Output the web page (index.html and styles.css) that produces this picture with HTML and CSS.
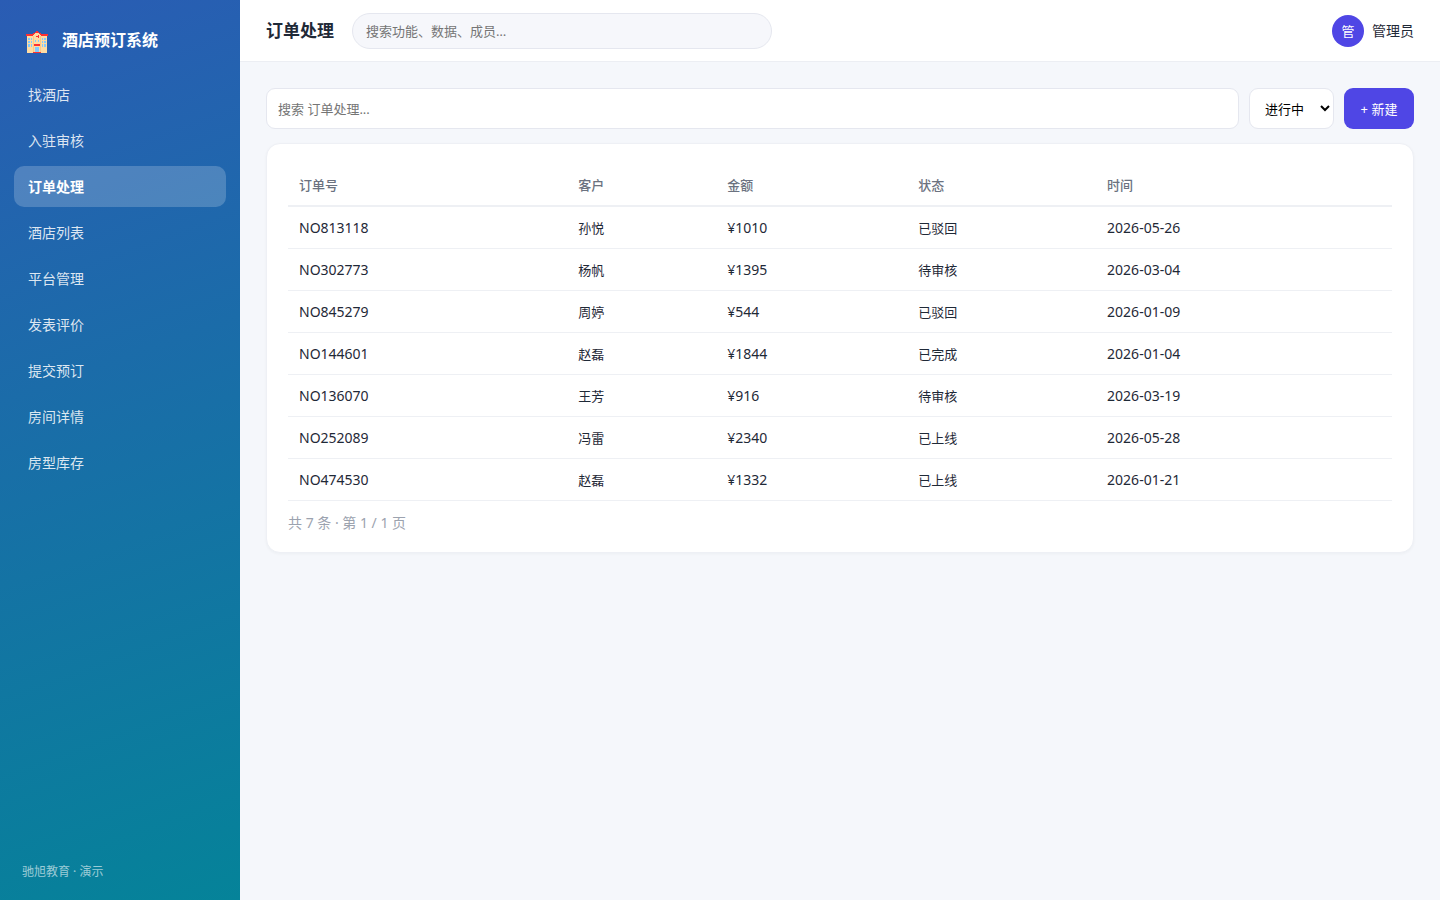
FILE: index.html
```html
<!DOCTYPE html>
<html lang="zh-CN">
<head>
<meta charset="utf-8">
<meta name="viewport" content="width=device-width, initial-scale=1">
<title>酒店预订系统</title>
<link rel="stylesheet" href="styles.css">
</head>
<body>
<div class="app">
  <aside class="sidebar">
    <div class="brand">
      <svg class="brand-icon" viewBox="0 0 22 22" shape-rendering="crispEdges" aria-hidden="true">
        <path fill="#ffdca3" d="M1 4h6V2h2V1h4v1h2v2h6v18H1z"/>
        <path fill="#fbc987" d="M7 5h1v17H7zM14 5h1v17h-1z"/>
        <path fill="#ff3030" d="M0 3h7V2h2v1H8v1H7v1H0zM9 1h1V0h2v1h1v1H9zM13 2h2v1h7v2h-7V4h-1V3h-1zM10 5h2V4h1v3h-1V6h-2zM8 13h6v2H8zM7 21h8v1H7z"/>
        <path fill="#83c9ff" d="M2 7h2v2H2zM5 7h1v2H5zM2 10h2v2H2zM5 10h1v2H5zM2 13h2v3H2zM5 13h1v3H5zM16 7h1v2h-1zM18 7h2v2h-2zM16 10h1v2h-1zM18 10h2v2h-2zM16 13h1v3h-1zM18 13h2v3h-2zM9 9h1v2H9zM12 9h1v2h-1zM9 16h4v5H9z"/>
      </svg>
      <span>酒店预订系统</span>
    </div>
    <nav class="nav">
      <a class="nav-item" href="#">找酒店</a>
      <a class="nav-item" href="#">入驻审核</a>
      <a class="nav-item active" href="#" aria-current="page">订单处理</a>
      <a class="nav-item" href="#">酒店列表</a>
      <a class="nav-item" href="#">平台管理</a>
      <a class="nav-item" href="#">发表评价</a>
      <a class="nav-item" href="#">提交预订</a>
      <a class="nav-item" href="#">房间详情</a>
      <a class="nav-item" href="#">房型库存</a>
    </nav>
    <div class="side-foot">驰旭教育 · 演示</div>
  </aside>
  <div class="main">
    <header class="topbar">
      <h1 class="title">订单处理</h1>
      <input class="global-search" type="search" aria-label="全局搜索" placeholder="搜索功能、数据、成员…">
      <div class="user"><span class="avatar">管</span><span>管理员</span></div>
    </header>
    <main class="content">
      <div class="toolbar">
        <input class="field filter" type="text" aria-label="搜索订单处理" placeholder="搜索 订单处理...">
        <select class="field status" aria-label="状态"><option>进行中</option></select>
        <button class="primary" type="button">+ 新建</button>
      </div>
      <section class="card">
        <table class="orders">
          <colgroup><col class="c-no"><col class="c-customer"><col class="c-amount"><col class="c-status"><col></colgroup>
          <thead><tr><th>订单号</th><th>客户</th><th>金额</th><th>状态</th><th>时间</th></tr></thead>
          <tbody>
            <tr><td class="num">NO813118</td><td>孙悦</td><td class="num">¥1010</td><td>已驳回</td><td class="num">2026-05-26</td></tr>
            <tr><td class="num">NO302773</td><td>杨帆</td><td class="num">¥1395</td><td>待审核</td><td class="num">2026-03-04</td></tr>
            <tr><td class="num">NO845279</td><td>周婷</td><td class="num">¥544</td><td>已驳回</td><td class="num">2026-01-09</td></tr>
            <tr><td class="num">NO144601</td><td>赵磊</td><td class="num">¥1844</td><td>已完成</td><td class="num">2026-01-04</td></tr>
            <tr><td class="num">NO136070</td><td>王芳</td><td class="num">¥916</td><td>待审核</td><td class="num">2026-03-19</td></tr>
            <tr><td class="num">NO252089</td><td>冯雷</td><td class="num">¥2340</td><td>已上线</td><td class="num">2026-05-28</td></tr>
            <tr><td class="num">NO474530</td><td>赵磊</td><td class="num">¥1332</td><td>已上线</td><td class="num">2026-01-21</td></tr>
          </tbody>
        </table>
        <div class="pager">共 7 条 · 第 1 / 1 页</div>
      </section>
    </main>
  </div>
</div>
</body>
</html>
```

FILE: styles.css
```css
* { box-sizing: border-box; }
body {
  margin: 0;
  background: #f5f7fb;
  color: #1f2937;
  font: 14px/20px "Noto Sans", "Noto Sans CJK SC", sans-serif;
}
input, select, button { font: inherit; font-size: 13px; }
.app { display: flex; min-height: 100vh; }

.sidebar {
  display: flex;
  flex-direction: column;
  flex: 0 0 240px;
  padding: 22px 14px 18px;
  background: linear-gradient(160deg, #2a5cb4, #058399);
  color: #fff;
}
.brand {
  display: flex;
  align-items: center;
  gap: 14px;
  height: 36px;
  padding-left: 12px;
  margin-bottom: 16px;
  font-size: 16px;
  font-weight: 700;
}
.brand-icon { width: 22px; height: 22px; margin-top: 4px; }
.nav { display: flex; flex-direction: column; gap: 5px; }
.nav-item {
  display: flex;
  align-items: center;
  height: 41px;
  padding: 0 14px;
  border-radius: 10px;
  color: rgba(255, 255, 255, .85);
  text-decoration: none;
}
.nav-item.active { background: rgba(255, 255, 255, .2); color: #fff; font-weight: 700; }
.side-foot { margin-top: auto; padding-left: 8px; font-size: 12px; color: rgba(255, 255, 255, .6); }

.main { flex: 1; min-width: 0; }
.topbar {
  display: flex;
  align-items: center;
  gap: 18px;
  height: 62px;
  padding: 0 26px;
  background: #fff;
  border-bottom: 1px solid #eceef3;
}
.title { margin: 0; font-size: 17px; font-weight: 700; }
.global-search {
  flex: 0 1 420px;
  min-width: 0;
  height: 36px;
  padding: 0 13px;
  border: 1px solid #e5e7ef;
  border-radius: 18px;
  background: #f6f7fb;
  appearance: none;
}
input::placeholder { color: #757575; }
.user { display: flex; align-items: center; gap: 8px; margin-left: auto; }
.avatar {
  display: grid;
  place-items: center;
  width: 32px;
  height: 32px;
  border-radius: 50%;
  background: #4f46e5;
  color: #fff;
  font-size: 13px;
}

.content { padding: 26px; }
.toolbar { display: flex; gap: 10px; height: 41px; margin-bottom: 14px; }
.field { border: 1px solid #e5e7ef; border-radius: 9px; background: #fff; }
.filter { flex: 1; min-width: 0; padding: 0 11px; }
.status { width: 85px; padding: 0 0 0 11px; color: #000; }
.primary {
  width: 70px;
  padding: 0;
  border: 0;
  border-radius: 9px;
  background: #4f46e5;
  color: #fff;
}
.card {
  padding: 20px 21px 19px;
  border: 1px solid #eef0f5;
  border-radius: 14px;
  background: #fff;
  box-shadow: 0 1px 3px rgba(30, 41, 59, .04);
}
.orders { width: 100%; table-layout: fixed; border-collapse: separate; border-spacing: 0; font-size: 13px; }
.c-no { width: 25.3%; }
.c-customer { width: 13.5%; }
.c-amount { width: 17.3%; }
.c-status { width: 17.1%; }
th, td { height: 42px; padding: 0 11px; text-align: left; border-bottom: 1px solid #eef0f4; }
th { height: 43px; border-bottom-width: 2px; color: #6b7280; font-weight: 500; }
.num { font-size: 14px; }
.pager { margin-top: 12px; font-size: 14px; color: #9ca3af; }
```
